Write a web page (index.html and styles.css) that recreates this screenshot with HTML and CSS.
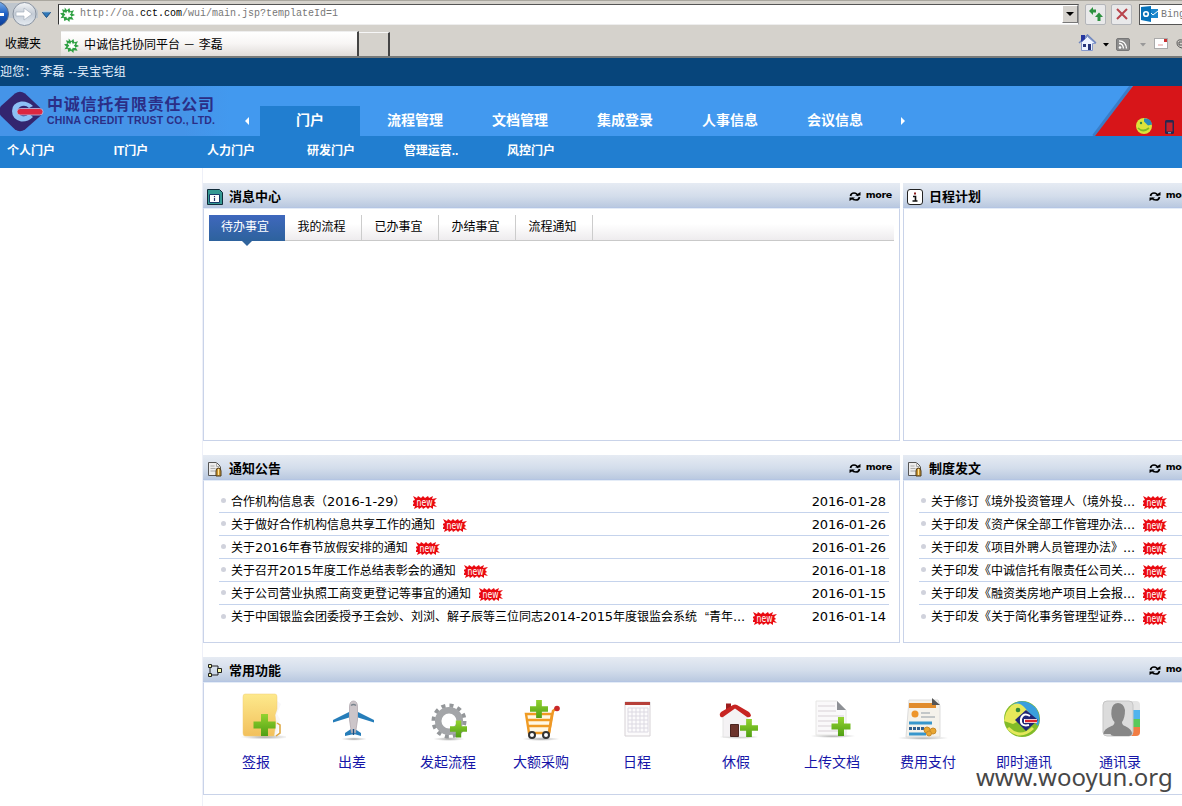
FILE: index.html
```html
<!DOCTYPE html>
<html lang="zh-CN">
<head>
<meta charset="utf-8">
<title>中诚信托协同平台 - 李磊</title>
<link rel="stylesheet" href="styles.css">
</head>
<body>
<svg class="defs" width="0" height="0">
  <defs>
    <linearGradient id="gBlue" x1="0" y1="0" x2="0" y2="1"><stop offset="0" stop-color="#7fb2ea"/><stop offset=".5" stop-color="#1c5fc4"/><stop offset="1" stop-color="#0b3a94"/></linearGradient>
    <linearGradient id="gGrey" x1="0" y1="0" x2="0" y2="1"><stop offset="0" stop-color="#f4f6f8"/><stop offset=".5" stop-color="#c3cbd5"/><stop offset="1" stop-color="#e6ecf2"/></linearGradient>
    <linearGradient id="gFolder" x1="0" y1="0" x2="0" y2="1"><stop offset="0" stop-color="#fde98c"/><stop offset="1" stop-color="#f2c05c"/></linearGradient>
    <linearGradient id="gPlus" x1="0" y1="0" x2="0" y2="1"><stop offset="0" stop-color="#93d32f"/><stop offset="1" stop-color="#4f9f14"/></linearGradient>
    <radialGradient id="gShadow"><stop offset="0" stop-color="#8b8b8b" stop-opacity=".8"/><stop offset="1" stop-color="#aaa" stop-opacity="0"/></radialGradient>
    <symbol id="flower" viewBox="0 0 16 16"><path d="M5 .5l2.500 3L10 1l1 3.500 4-1-2 3.500 3 1.500-3.500 1.500 2 3.500-4-.5-.5 3-2.500-2.500L4.500 15 4 11.500l-3.500.5 2-3L0 7l3.500-1.200L2 2.500l3 .8z" fill="#2fa043"/><path d="M8 4.500l1 2.300 2.500-.8-1.300 2.200 1.600 2-2.600-.3L8 12 7 9.800l-2.500.4L6 8.200 4.500 6l2.600.8z" fill="#fff" stroke="#fff"/></symbol>
    <symbol id="refresh" viewBox="0 0 12 11"><path d="M1.500 5Q2 2 5 2T9 5M10.500 6Q10 9 7 9T3 7" fill="none" stroke="#000" stroke-width="1.700"/><path d="M6 4.500h5.500V1zM6 6.500H.5V10z"/></symbol>
    <symbol id="plus" viewBox="0 0 22 22"><path d="M7.500 0h7v7.500H22v7h-7.500V22h-7v-7.500H0v-7h7.500z" fill="url(#gPlus)"/></symbol>
    <symbol id="doc" viewBox="0 0 16 16"><path d="M1.500 1.500h8l4 4v9h-12z" fill="#ececec" stroke="#555"/><path d="M9.500 1.500v4h4M3.500 5h4M3.500 7.500h5M3.500 10h5" fill="none" stroke="#aaa"/><path d="M9 10q0-3 2.500-3t2.500 3v5H9z" fill="#c8942f" stroke="#4c3b1d"/><path d="M11.500 8v6" stroke="#ffe59b"/></symbol>
    <symbol id="new" viewBox="0 0 24 14"><path d="M0 1l4 2 1-2 3 2 2-2 2 2 3-2 1 2 4-2-1 3 5-1-3 3 2 2-2 1 3 3-4-1 0 3-3-2-2 2-2-2-3 2-1-2-3 2-1-2-4 2 1-3-3 0 2-3-2-2 3-1z" fill="#ea0a10"/><text x="3.500" y="10.500" class="new-word" textLength="16" lengthAdjust="spacingAndGlyphs">new</text></symbol>
  </defs>
</svg>

<header class="browser">
  <div class="address-row">
    <svg class="navbtns" width="56" height="27" viewBox="0 0 56 27">
      <path d="M0 2h24q10 1 14 8v7H0z" fill="#bfc6cd"/><circle cx="-4" cy="13" r="12.500" fill="url(#gBlue)" stroke="#5a6c88"/><path d="M0 12h4v3H0z" fill="#fff"/>
      <circle cx="24.500" cy="13" r="11.500" fill="url(#gGrey)" stroke="#8a93a0"/><path d="M16 11h8V7l8 6-8 6v-4h-8z" fill="#fff" stroke="#a5afbb" stroke-width=".7"/>
      <path d="M42.500 11.500h8l-4 5z" fill="#2e78ba" stroke="#174d82"/><path d="M43 11h7" stroke="#9fd0f5"/>
    </svg>
    <div class="address">
      <svg width="15" height="15"><use href="#flower"/></svg>
      <span class="url">http://oa.<b>cct.com</b>/wui/main.jsp?templateId=1</span>
      <span class="dropdown"></span>
    </div>
    <span class="toolbtn"><svg width="16" height="16" viewBox="0 0 16 16"><path d="M1 5l4-4v2.500h3v3H5V9zM15 11l-4-4.500L7 11h2.500v4h3v-4z" fill="#2d9140"/></svg></span>
    <span class="toolbtn stop"><svg width="14" height="14" viewBox="0 0 14 14"><path d="M2 2l10 10M12 2L2 12" stroke="#b8434b" stroke-width="2"/></svg></span>
    <div class="search"><svg width="17" height="16" viewBox="0 0 17 16"><path d="M8 3h9v9H8z" fill="#1a86cc"/><path d="M8 5l4 4 5-4" fill="none" stroke="#fff"/><path d="M0 1l10-1v16L0 14z" fill="#0872b9"/><circle cx="5" cy="8" r="2.300" fill="none" stroke="#fff" stroke-width="1.600"/></svg><span>Bing</span></div>
  </div>
  <div class="tab-row">
    <span class="fav">收藏夹</span>
    <div class="tab"><svg width="15" height="15"><use href="#flower"/></svg><span>中诚信托协同平台 － 李磊</span></div>
    <div class="newtab"></div>
    <svg class="tools" width="106" height="20" viewBox="0 0 106 20">
      <path d="M4.500 8.500l6-6 8 7-3 0v7h-11z" fill="#edf3ff" stroke="#8598cc"/><path d="M2 9l8.500-8 8.500 8" fill="none" stroke="#6f87c0" stroke-width="1.500"/><path d="M4 1h4v4l-4 3z" fill="#2637a0"/><path d="M11 10h3v6h-3zM6 10h3v3H6z" fill="#27357a"/>
      <path d="M26 9h6l-3 3.500z"/><rect x="39.500" y="4.500" width="13" height="12" rx="1.500" fill="#8c8c8c" stroke="#777"/><circle cx="43" cy="13.500" r="1.300" fill="#fff"/><path d="M42 9.500q4 0 4.500 5M42 6.800q7 .2 7.500 7.700" fill="none" stroke="#fff" stroke-width="1.300"/>
      <path d="M63 9h6l-3 3.500z" fill="#999"/><rect x="77.500" y="4.500" width="13" height="10" fill="#fff" stroke="#aaa"/><path d="M87 5h3v3h-3z" fill="#c33"/><path d="M81 11h5" stroke="#d99"/><path d="M105 6q-5-1-5 3t5 5M105 8h-3v3h3" fill="none" stroke="#555"/>
    </svg>
  </div>
</header>

<div class="welcome">迎您： 李磊 --吴宝宅组</div>
<div class="banner">
  <svg class="logo" width="230" height="50" viewBox="0 0 230 50">
    <path d="M15 7.500Q20 4 25 7.500L42 23.500v5L25 43.500Q20 47 15 43.500L1 30Q-3 25 1 20z" fill="#33256f"/>
    <path d="M33 20Q28 15 21 15.500 12 17 12 25T21 35.500Q28 36 33 31L29 28Q26 31 22 30 18 29 18 25t4-5q4-1 7 2z" fill="#8cc0f5"/><rect x="17" y="22.500" width="26" height="6.500" rx="3.200" fill="#dc2740" stroke="#b9c3e8" stroke-width=".8"/>
    <text x="47" y="24" class="logo-cn" textLength="167">中诚信托有限责任公司</text>
    <text x="47" y="38" class="logo-en" textLength="168">CHINA CREDIT TRUST CO., LTD.</text>
  </svg>
  <span class="arrow left"></span>
  <nav class="mainnav"><a class="on">门户</a><a>流程管理</a><a>文档管理</a><a>集成登录</a><a>人事信息</a><a>会议信息</a></nav>
  <span class="arrow right"></span>
  <svg class="corner" width="90" height="50" viewBox="0 0 90 50">
    <path d="M39 0L1.500 50" stroke="#284a80" stroke-opacity=".35" stroke-width="3"/><path d="M41 0h49v50H3z" fill="#d71519"/>
    <circle cx="52" cy="40" r="8" fill="#dbe33b"/><path d="M52 32.500q7-1 8 6l-4 1-4-4z" fill="#2789bb"/><circle cx="49" cy="37" r="1.200" fill="#384"/><path d="M46 42q5 5 11 0" fill="none" stroke="#7fba25" stroke-width="1.700"/>
    <rect x="73" y="34" width="9" height="14" rx="1.500" fill="#26284f"/><path d="M74.500 36.500h6v9h-6z" fill="#c5202c"/><path d="M76 46.800h3" stroke="#9bd"/>
  </svg>
</div>
<nav class="subnav"><a>个人门户</a><a>IT门户</a><a>人力门户</a><a>研发门户</a><a>管理运营..</a><a>风控门户</a></nav>

<main class="portal">
  <section class="panel messages">
    <h2><svg width="16" height="16" viewBox="0 0 16 16"><path d="M.5.5h12l3 3v12H.5z" fill="#369a94" stroke="#102a38"/><path d="M2.500 5.500h10v8h-10z" fill="#fff" stroke="#183b69"/><path d="M7.500 7v1.200M7.500 9v3" stroke="#28386d" stroke-width="1.200"/></svg><span>消息中心</span><a class="more"><svg width="12" height="11"><use href="#refresh"/></svg>more</a></h2>
    <div class="body"><div class="tabs"><a class="on">待办事宜</a><a>我的流程</a><a>已办事宜</a><a>办结事宜</a><a>流程通知</a></div></div>
  </section>
  <section class="panel schedule">
    <h2><svg width="16" height="16" viewBox="0 0 16 16"><rect x=".5" y=".5" width="15" height="15" rx="2.500" fill="#fff" stroke="#222"/><path d="M8 3.500v2" stroke="#8b1f1f" stroke-width="2"/><path d="M6 7.500h2.500v5M5.500 12h5" fill="none" stroke="#111" stroke-width="1.600"/></svg><span>日程计划</span><a class="more"><svg width="12" height="11"><use href="#refresh"/></svg>more</a></h2>
    <div class="body"></div>
  </section>
  <section class="panel notices">
    <h2><svg width="16" height="16"><use href="#doc"/></svg><span>通知公告</span><a class="more"><svg width="12" height="11"><use href="#refresh"/></svg>more</a></h2>
    <ul class="body list">
      <li><span>合作机构信息表（<i>2016-1-29</i>）</span><svg><use href="#new"/></svg><time>2016-01-28</time></li>
      <li><span>关于做好合作机构信息共享工作的通知</span><svg><use href="#new"/></svg><time>2016-01-26</time></li>
      <li><span>关于<i>2016</i>年春节放假安排的通知</span><svg><use href="#new"/></svg><time>2016-01-26</time></li>
      <li><span>关于召开<i>2015</i>年度工作总结表彰会的通知</span><svg><use href="#new"/></svg><time>2016-01-18</time></li>
      <li><span>关于公司营业执照工商变更登记等事宜的通知</span><svg><use href="#new"/></svg><time>2016-01-15</time></li>
      <li><span>关于中国银监会团委授予王会妙、刘浏、解子辰等三位同志<i>2014-2015</i>年度银监会系统<b class="quote">“</b>青年<i>...</i></span><svg><use href="#new"/></svg><time>2016-01-14</time></li>
    </ul>
  </section>
  <section class="panel rules">
    <h2><svg width="16" height="16"><use href="#doc"/></svg><span>制度发文</span><a class="more"><svg width="12" height="11"><use href="#refresh"/></svg>more</a></h2>
    <ul class="body list">
      <li><span>关于修订《境外投资管理人（境外投<i>...</i></span><svg><use href="#new"/></svg></li>
      <li><span>关于印发《资产保全部工作管理办法<i>...</i></span><svg><use href="#new"/></svg></li>
      <li><span>关于印发《项目外聘人员管理办法》<i>...</i></span><svg><use href="#new"/></svg></li>
      <li><span>关于印发《中诚信托有限责任公司关<i>...</i></span><svg><use href="#new"/></svg></li>
      <li><span>关于印发《融资类房地产项目上会报<i>...</i></span><svg><use href="#new"/></svg></li>
      <li><span>关于印发《关于简化事务管理型证券<i>...</i></span><svg><use href="#new"/></svg></li>
    </ul>
  </section>
  <section class="panel apps">
    <h2><svg width="16" height="16" viewBox="0 0 16 16"><path d="M3 3h8v5M3 4v8h8V8" fill="none" stroke="#222"/><g fill="#f4f7a5" stroke="#222"><path d="M1.500 1.500h3v3h-3zM10.500 5.500h4v4h-4zM1.500 10.500h3v3h-3z"/></g></svg><span>常用功能</span><a class="more"><svg width="12" height="11"><use href="#refresh"/></svg>more</a></h2>
    <div class="body grid">
      <a><svg viewBox="0 0 60 50"><ellipse cx="39" cy="44" rx="25" ry="2.500" fill="url(#gShadow)"/><path d="M50 7l5 4-4 10 3 5-3 16h-9V4z" fill="#f8f7fa"/><path d="M51 30l3 2v8l-4 3" fill="none" stroke="#dda53d" stroke-width="1.500"/><path d="M19 1h30q2 0 2 3v12l-2 6 1 8-2 13H19q-2 0-2-3V4q0-3 2-3z" fill="url(#gFolder)" stroke="#f1cf76" stroke-width=".5"/><use href="#plus" x="27" y="21" width="23" height="22"/></svg>签报</a>
      <a><svg viewBox="0 0 60 50"><ellipse cx="32" cy="46" rx="13" ry="1.800" fill="url(#gShadow)"/><path d="M27 19L11 27v2.500l16-5zM36 19l16 8v2.500l-16-5zM29 36l-6 4v3l9-2 7 2v-3l-6-4z" fill="#267db9"/><path d="M27.500 27V14q0-6 4-6t4 6v13l-2 13h-4z" fill="#ccc5c9" stroke="#aaa0a8" stroke-width=".7"/><path d="M29 12.500q2.500-2 5 0" fill="none" stroke="#79838d" stroke-width="1.500"/><path d="M31.500 36v6" stroke="#154f82" stroke-width="1.500"/></svg>出差</a>
      <a><svg viewBox="0 0 60 50"><ellipse cx="31" cy="46" rx="16" ry="2" fill="url(#gShadow)"/><circle cx="31" cy="28" r="15.500" fill="none" stroke="#94979a" stroke-width="4" stroke-dasharray="4 4.116"/><circle cx="31" cy="28" r="10.800" fill="none" stroke="#a3a5a8" stroke-width="6.500"/><use href="#plus" x="32" y="27" width="17" height="18"/></svg>发起流程</a>
      <a class="shift"><svg viewBox="0 0 60 50"><ellipse cx="30" cy="46" rx="19" ry="2" fill="url(#gShadow)"/><path d="M15 21h26l-3 19H18zM15 27h25M16 33h23" fill="#fff8e5" stroke="#f09b24" stroke-width="2.400"/><path d="M38 40l4-22 5-4" fill="none" stroke="#ef9926" stroke-width="2.500"/><circle cx="46" cy="15.500" r="2.800" fill="#c92728"/><circle cx="21" cy="42" r="3" fill="#fff" stroke="#333" stroke-width="2"/><circle cx="35" cy="42" r="3" fill="#fff" stroke="#333" stroke-width="2"/><use href="#plus" x="19" y="6" width="18" height="20"/></svg>大额采购</a>
      <a class="shift"><svg viewBox="0 0 60 50"><path d="M18 9h25v34H18z" fill="#fcfbfc" stroke="#d6d1d5"/><path d="M18 9h25v3H18z" fill="#b6403a"/><path d="M21 15h20M21 19h20M21 23h20M21 27h20M21 31h20M21 35h20M21 39h20M21 15v24M25 15v24M29 15v24M33 15v24M37 15v24M41 15v24" stroke="#dcd9e2" stroke-width="1"/></svg>日程</a>
      <a><svg viewBox="0 0 60 50"><ellipse cx="33" cy="44" rx="20" ry="2" fill="url(#gShadow)"/><path d="M17 22l12-9 12 9v22H17z" fill="#f4f2f4" stroke="#e4e4e4"/><path d="M20 17v-6.500h5V15" fill="#9c1d1d"/><path d="M14 23q-1-2 1-4l12-7q2-1 4 0l12 7q2 2 2 4-2 2-4 1L29 15.500 17 24q-2 1-3-1z" fill="#c72422"/><path d="M24.500 31.500h8v12h-8z" fill="#6c342c" stroke="#4b2520"/><use href="#plus" x="34" y="26" width="18" height="18"/></svg>休假</a>
      <a><svg viewBox="0 0 60 50"><ellipse cx="31" cy="43" rx="23" ry="2" fill="url(#gShadow)"/><path d="M14 8h21l9 9v25H14z" fill="#faf9fa" stroke="#e6e6e4"/><path d="M35 8v9h9z" fill="#8d9095"/><path d="M16 13h17M16 18h18M16 23h26M16 28h26M16 33h26M16 38h26" stroke="#e3dee2" stroke-width="1.500"/><use href="#plus" x="28" y="24" width="22" height="19"/></svg>上传文档</a>
      <a><svg viewBox="0 0 60 50"><ellipse cx="25" cy="45" rx="26" ry="2" fill="url(#gShadow)"/><path d="M11 7h29l2 6v31H8z" fill="#f5f2eb" stroke="#ddd"/><path d="M11 10h27v5H11z" fill="#e18c2c"/><path d="M34 5l8 7h-8z" fill="#555"/><circle cx="17" cy="21" r="3.500" fill="#ed952b"/><path d="M23 20h9M23 24h14" stroke="#b2b9bd" stroke-width="1.500"/><path d="M11 30h23M11 41h17" stroke="#3896cc" stroke-width="3"/><path d="M11 35.500h15" stroke="#315f8e" stroke-width="3" stroke-dasharray="3 1"/><g fill="#e9a732" stroke="#c98b2b"><circle cx="29" cy="37" r="3"/><circle cx="35" cy="38" r="3"/><circle cx="31" cy="40.500" r="2.500"/></g></svg>费用支付</a>
      <a><svg viewBox="0 0 60 50"><circle cx="28" cy="26" r="18" fill="#82bb28"/><path d="M18 12Q30 3 42 15q6 9 2 18L31 19z" fill="#3a9fdd"/><path d="M12 20q9-16 19-5l6 7-18 9-9-3z" fill="#e6e95a"/><circle cx="24" cy="17" r="2.300" fill="#358936"/><path d="M14 35q12 12 25 0" fill="none" stroke="#e4e85b" stroke-width="3"/><path d="M32 17l12 10-12 11-11-11z" fill="#202777"/><path d="M36 23q-7-4-9 3-1 8 8 6" fill="none" stroke="#fff" stroke-width="2"/><path d="M30 28h13" stroke="#fff" stroke-width="4"/><path d="M31 28h12" stroke="#da2630" stroke-width="2.500"/></svg>即时通讯</a>
      <a><svg viewBox="0 0 60 50"><rect x="37" y="8" width="13" height="35" rx="4" fill="#e5e5e5"/><path d="M39 17h11v9H39z" fill="#51b4ee"/><path d="M39 26h11v8H39z" fill="#5ac95b"/><path d="M39 34h11v5q0 4-4 4h-7z" fill="#f27d44"/><rect x="13" y="8" width="30" height="35" rx="4" fill="#dcdcdc" stroke="#c6c6c6"/><path d="M13.500 41q0-5 8-8 3-1 3-4-4-4-3-12 1-7 6.500-7t7 7q0 8-3 12 0 3 3 4 7 3 7 8-1 2-3 2h-15q-3 0-3.500-2z" fill="#878787"/></svg>通讯录</a>
    </div>
  </section>
</main>
<div class="watermark">www.wooyun.org</div>
</body>
</html>
```

FILE: styles.css
```css
* { box-sizing: border-box; }
body { margin: 0; width: 1182px; height: 806px; overflow: hidden; position: relative; background: #fff; color: #000; font: 12px/16px "Liberation Sans", "Noto Sans CJK SC", sans-serif; }
svg { display: block; flex: none; }
.defs { position: absolute; }
a { color: inherit; text-decoration: none; }

/* Browser chrome */
.browser { height: 58px; background: #d5d2cc; border-bottom: 2px solid #777a79; overflow: hidden; }
.address-row { display: flex; align-items: center; height: 27px; border-top: 1px solid #aaa79f; width: 1200px; }
.address { display: flex; align-items: center; width: 1021px; height: 21px; margin-left: 2px; padding-left: 1px; background: #fff; border: 1px solid #444; border-color: #555 #999 #eee #333; }
.url { flex: 1; margin-left: 5px; font: 10px/18px "Liberation Mono", monospace; color: #777; white-space: pre; }
.url b { font-weight: normal; color: #000; }
.dropdown { display: grid; place-items: center; width: 16px; height: 18px; background: #d6d3ce; border: 1px solid #777; border-top-color: #fff; border-left-color: #fff; }
.dropdown::after { content: ""; border: 4px solid transparent; border-top-color: #000; border-bottom: 0; }
.toolbtn { display: grid; place-items: center; width: 21px; height: 21px; margin-left: 6px; background: #e9e9ea; border: 1px solid #b3b5b9; border-radius: 2px; }
.toolbtn.stop { margin-left: 5px; }
.search { display: flex; align-items: center; gap: 3px; width: 60px; height: 21px; margin-left: 7px; padding-left: 1px; background: #fff; border: 1px solid #555; font: 10px "Liberation Mono", monospace; color: #777; }
.tab-row { display: flex; height: 30px; align-items: center; }
.fav { flex: none; width: 61px; padding: 4px 0 0 5px; }
.tab { flex: none; display: flex; align-items: center; gap: 5px; width: 298px; height: 26px; padding: 1px 0 0 3px; margin-top: 4px; background: linear-gradient(#fff, #f8f6f5 45%, #dedad7); border-right: 2px solid #444; border-top: 1px solid #eee; }
.newtab { flex: none; width: 31px; height: 25px; margin-top: 5px; border: 2px solid #444; border-width: 1px 2px 0 0; border-top-color: #f7f7f7; }
.tools { margin-left: 687px; margin-top: 3px; }

/* Site header */
.welcome { height: 28px; background: #07457b; color: #e8f3ff; line-height: 29px; letter-spacing: .25px; white-space: pre; }
.banner { display: flex; align-items: flex-end; height: 50px; background: #4299ef; color: #fff; }
.logo { background: linear-gradient(90deg, #4594e8 80%, #4299ef); }
.logo-cn { font: bold 16px "Noto Sans CJK SC", sans-serif; fill: #2b2e86; }
.logo-en { font: bold 10.5px "Liberation Sans", sans-serif; fill: #2b2e86; }
.arrow { width: 4px; height: 8px; margin-bottom: 11px; border: 4px solid transparent; border-width: 4px 0; }
.arrow.left { margin-left: 15px; border-right: 4px solid #fff; }
.arrow.right { margin-left: 16px; border-left: 4px solid #fff; }
.mainnav { display: flex; gap: 5px; margin-left: 11px; }
.mainnav a { width: 100px; height: 30px; text-align: center; font-weight: bold; font-size: 14px; line-height: 28px; }
.mainnav .on { background: #217ed0; }
.corner { margin-left: auto; }
.subnav { display: flex; height: 32px; background: #217ed0; color: #fff; }
.subnav a { width: 100px; text-align: center; font-weight: bold; line-height: 31px; }
.subnav a:first-child { margin-left: -19px; }

/* Portal panels */
.portal { display: grid; grid-template-columns: 697px 297px; grid-template-rows: 258px 188px 138px; row-gap: 14px; column-gap: 3px; width: 1000px; height: 638px; margin-left: 202px; padding-top: 15px; border-left: 1px solid #eef0f8; }
.panel { display: flex; flex-direction: column; min-width: 0; }
.apps { grid-column: 1 / 3; }
.panel h2 { display: flex; align-items: center; height: 25px; margin: 0; padding: 3px 8px 0 4px; background: linear-gradient(#e6ebf3, #d3ddeb 55%, #bac9e0); border-bottom: 1px solid #b4c5e3; font-size: 13px; }
.panel h2 span { margin-left: 6px; }
.more { display: flex; align-items: center; gap: 5px; margin: -3px 0 0 auto; font: bold 9.5px/12px "DejaVu Sans", sans-serif; letter-spacing: -.3px; }
.more svg { margin-top: 3px; }
.body { flex: 1; margin: 0; padding: 0; border: 1px solid #c9d3e9; border-top-color: #e4ecf7; }
.tabs { display: flex; height: 26px; margin: 6px 5px 0; border-bottom: 1px solid #c9c9c9; background: linear-gradient(#fff 35%, #eeecee); }
.tabs a { width: 77px; height: 25px; border-right: 1px solid #ccc; text-align: center; line-height: 24px; padding-right: 3px; }
.tabs .on { position: relative; width: 76px; height: 26px; padding-right: 4px; background: linear-gradient(#3f68bd, #2d629d); color: #fff; border: 0; }
.tabs .on::after { content: ""; position: absolute; left: 33px; top: 26px; border: 5px solid transparent; border-top-color: #31659d; border-bottom: 0; }
.list { list-style: none; padding: 9px 10px 0 15px; }
.list li { display: flex; align-items: center; height: 23px; padding: 1px 3px 0 0; border-bottom: 1px solid #c5d3ec; white-space: nowrap; }
.list li:last-child { border-bottom: 0; }
.list li::before { content: ""; width: 5px; height: 5px; margin: 0 5px 2px 2px; border-radius: 50%; background: #d0d2dc; flex: none; }
.list i { font: 13px/16px "DejaVu Sans", sans-serif; letter-spacing: -.1px; }
.list svg { width: 24px; height: 14px; margin: 1px 0 0 8px; }
.list time { margin-left: auto; font: 13px/16px "DejaVu Sans", sans-serif; letter-spacing: -.12px; }
.quote { display: inline-block; width: 12px; font-weight: normal; text-align: right; }
.new-word { font: 10px "DejaVu Sans", sans-serif; fill: #fff; }
.grid { display: grid; grid-template-columns: repeat(10, 96px); padding: 10px 0 0 4px; }
.grid a { display: flex; flex-direction: column; align-items: center; gap: 9px; color: #1515a8; font-size: 14px; line-height: 20px; }
.grid svg { width: 60px; height: 50px; }
.grid .shift { padding-right: 6px; }

.watermark { position: absolute; left: 976px; top: 762px; color: #474747; font: 24px/30px "Noto Sans", sans-serif; }
```
